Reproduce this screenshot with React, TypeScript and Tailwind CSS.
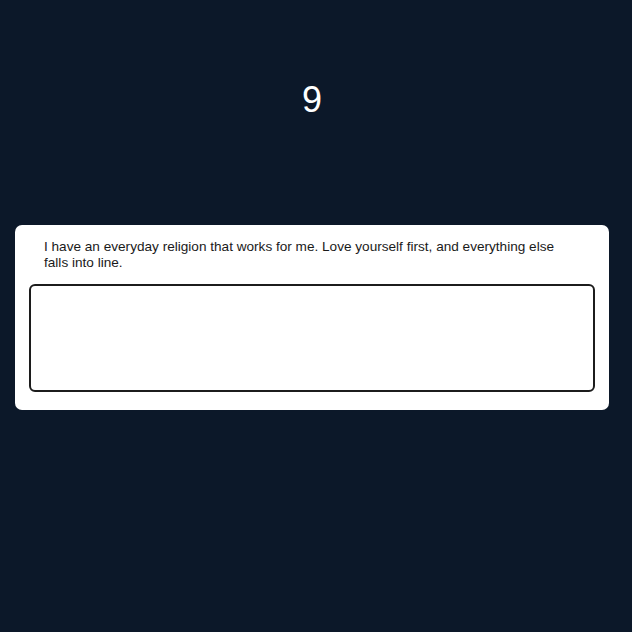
import React, { useState } from 'react';

export default function App() {
  const [answer, setAnswer] = useState('');

  return (
    <div className="min-h-[632px] w-full bg-[#0c1829] font-['Liberation_Sans',Arial,sans-serif]">
      <div className="w-[624px]">
        <div className="pt-[79px] text-center text-[36px] leading-[42px] text-white">9</div>

        <div className="ml-[15px] mt-[104px] w-[594px] rounded-[7px] bg-white pt-[14px] pb-[18px] px-[14px]">
          <p className="px-[15px] text-[13.6px] leading-[16px] text-[#1a1a1a]">
            I have an everyday religion that works for me. Love yourself first, and everything else falls into line.
          </p>
          <textarea
            value={answer}
            onChange={(e) => setAnswer(e.target.value)}
            className="mt-[13px] block h-[108px] w-full resize-none rounded-[6px] border-2 border-[#1c1c1c] bg-white outline-none"
          />
        </div>
      </div>
    </div>
  );
}
